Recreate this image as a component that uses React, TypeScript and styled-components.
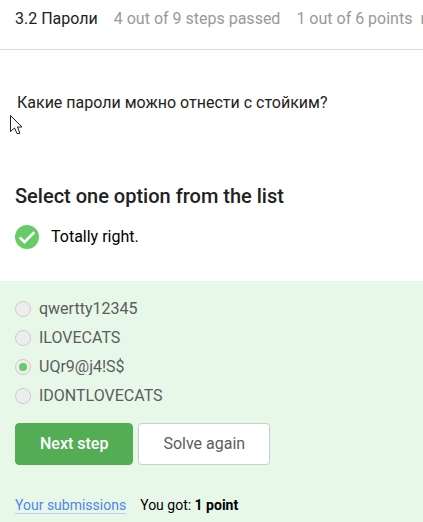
import React, { useState } from "react";
import styled, { createGlobalStyle } from "styled-components";

const GlobalStyle = createGlobalStyle`
  *, *::before, *::after { box-sizing: border-box; }
  html { background: #fff; }
  body {
    margin: 0;
    font: 400 16px/24px Roboto, "Liberation Sans", sans-serif;
    color: #222;
    overflow-x: hidden;
  }
`;

const Page = styled.div`
  position: relative;
  display: flex;
  flex-direction: column;
  min-height: 100vh;
`;

const TopBar = styled.header`
  display: flex;
  gap: 16px;
  padding: 7px 15px 18px;
  border-bottom: 1px solid #dadada;
  white-space: nowrap;
  overflow: hidden;
`;

const LessonTitle = styled.h1`
  margin: 0;
  font-size: 16px;
  font-weight: 400;
`;

const Progress = styled.span`
  color: #999;
  white-space: pre;
`;

const Question = styled.p`
  margin: 0;
  padding: 41px 17px 69px;
`;

const Heading = styled.h2`
  margin: 0;
  padding: 0 15px;
  font-size: 20px;
  line-height: 24px;
  font-weight: 500;
`;

const Feedback = styled.div`
  display: flex;
  align-items: center;
  gap: 12px;
  padding: 17px 15px 32px;
  color: #000;
`;

const CheckIcon = styled.svg`
  flex: none;
  width: 24px;
  height: 24px;
`;

const Pointer = styled.svg`
  position: absolute;
  left: 10px;
  top: 115px;
  width: 13px;
  height: 20px;
  pointer-events: none;
`;

const Quiz = styled.form`
  flex: 1;
  padding: 13px 15px 4px;
  background: #e7f8e8;
`;

const Options = styled.fieldset`
  display: grid;
  grid-auto-rows: minmax(29px, auto);
  margin: 0;
  padding: 0;
  border: 0;
`;

const Option = styled.label`
  display: flex;
  align-items: center;
  gap: 8px;
  color: #5c5c5c;
`;

const Radio = styled.input`
  appearance: none;
  display: grid;
  place-items: center;
  flex: none;
  width: 16px;
  height: 16px;
  margin: 0;
  border: 1px solid #ccc;
  border-radius: 50%;
  background: #eee;

  &:checked::before {
    content: "";
    width: 8px;
    height: 8px;
    border-radius: 50%;
    background: #66cc66;
  }
`;

const Actions = styled.div`
  display: flex;
  flex-wrap: wrap;
  gap: 5px;
  margin-top: 13px;
`;

const Button = styled.button<{ $primary?: boolean }>`
  padding: 8px 24px;
  border: 1px solid ${(p) => (p.$primary ? "#54ad54" : "#ccc")};
  border-radius: 4px;
  background: ${(p) => (p.$primary ? "#54ad54" : "#fff")};
  color: ${(p) => (p.$primary ? "#fff" : "#5c5c5c")};
  font: inherit;
  font-weight: ${(p) => (p.$primary ? 500 : 400)};
  cursor: pointer;
`;

const Result = styled.div`
  display: flex;
  align-items: flex-start;
  gap: 14px;
  margin-top: 32px;
  font-size: 14px;
  line-height: 16px;
  color: #000;
`;

const SubmissionsLink = styled.a`
  border-bottom: 1px solid #b5d0f3;
  color: #4d86ec;
  text-decoration: none;
`;

const options = ["qwertty12345", "ILOVECATS", "UQr9@j4!S$", "IDONTLOVECATS"];

export default function App() {
  const [selected, setSelected] = useState(2);

  return (
    <>
      <GlobalStyle />
      <Page>
        <TopBar>
          <LessonTitle>3.2 Пароли</LessonTitle>
          <Progress>4 out of 9 steps passed</Progress>
          <Progress>{"1 out of 6 points  received"}</Progress>
        </TopBar>
        <main>
          <Question>Какие пароли можно отнести с стойким?</Question>
          <Heading id="quiz-heading">Select one option from the list</Heading>
          <Feedback role="status">
            <CheckIcon viewBox="0 0 24 24" aria-hidden="true">
              <circle cx="12" cy="12" r="12" fill="#66cc66" />
              <path d="M4.7 12.4 9.5 17 19.3 7.2" fill="none" stroke="#fff" strokeWidth="2.7" />
            </CheckIcon>
            <span>Totally right.</span>
          </Feedback>
        </main>
        <Quiz onSubmit={(e) => e.preventDefault()}>
          <Options aria-labelledby="quiz-heading">
            {options.map((text, i) => (
              <Option key={text}>
                <Radio
                  type="radio"
                  name="answer"
                  checked={selected === i}
                  onChange={() => setSelected(i)}
                />
                <span>{text}</span>
              </Option>
            ))}
          </Options>
          <Actions>
            <Button type="submit" $primary>Next step</Button>
            <Button type="button">Solve again</Button>
          </Actions>
          <Result>
            <SubmissionsLink href="#submissions">Your submissions</SubmissionsLink>
            <span>You got: <b>1 point</b></span>
          </Result>
        </Quiz>
        <Pointer viewBox="0 0 13 20" aria-hidden="true">
          <path
            d="M.5 .5V16.5L4.5 13 7 18.5H9.5V17L7.5 12H12Z"
            fill="#fff"
            stroke="#1c1c2c"
            strokeWidth="1"
          />
        </Pointer>
      </Page>
    </>
  );
}
